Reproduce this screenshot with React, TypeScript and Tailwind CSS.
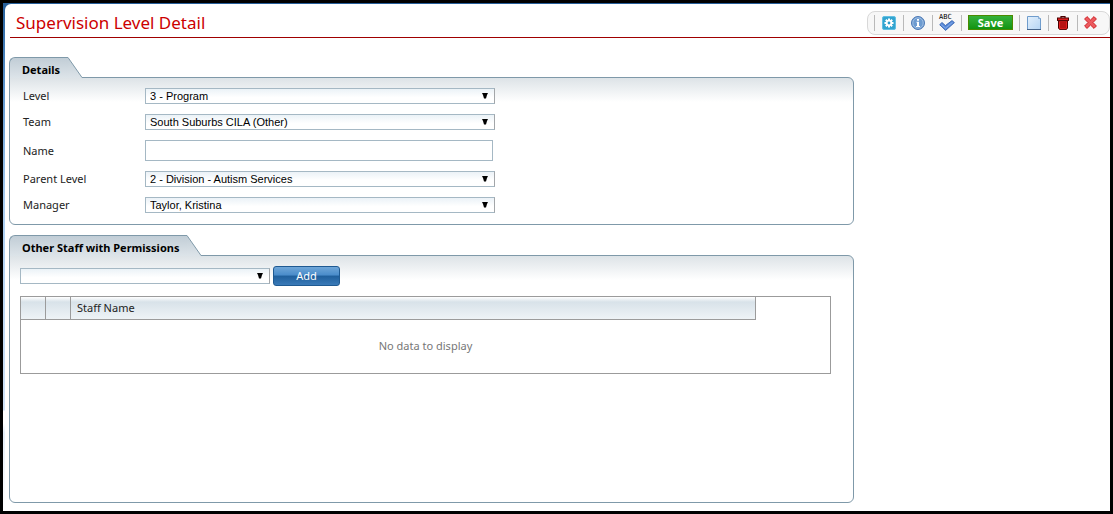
import React, { useState } from 'react';
import clsx from 'clsx';

const SelectBox = ({ id, label, options, className }: { id: string; label?: string; options: string[]; className?: string }) => (
  <div className={clsx('relative', className)}>
    <select
      id={id}
      aria-label={label}
      className="block h-4 w-full appearance-none border border-[#a5b8c4] border-r-[#a3a6a9] bg-linear-to-b from-[#ebf2f7] to-white to-60% pl-1 pr-5 font-['Liberation_Sans',sans-serif] text-[11px] leading-[14px] text-black"
    >
      {options.map((option) => (
        <option key={option}>{option}</option>
      ))}
    </select>
    <svg className="pointer-events-none absolute right-[7px] top-[5px]" width="6" height="6" viewBox="0 0 6 6">
      <path d="M0 0H6L5 2L4 5.5H2L1 2Z" fill="#000" />
    </svg>
  </div>
);

const Panel = ({ title, className, children }: { title: string; className?: string; children: React.ReactNode }) => (
  <section className="w-full max-w-[845px]">
    {/* Tab */}
    <div className="relative -mb-px flex h-[21px]">
      <h2 className="rounded-tl-md border-l border-t border-[#7f99a9] bg-linear-to-b from-[#c1cdd6] to-[#dde4e9] pl-3 pr-2 text-[11px] font-bold leading-6 text-black">
        {title}
      </h2>
      <svg width="15" height="21" viewBox="0 0 15 21">
        <defs>
          <linearGradient id="tabFill" x1="0" y1="0" x2="0" y2="1">
            <stop offset="0" stopColor="#c1cdd6" />
            <stop offset="1" stopColor="#dde4e9" />
          </linearGradient>
        </defs>
        <path d="M0 0.5L14 20.5V21H0Z" fill="url(#tabFill)" />
        <path d="M0 0.5L14 20.5H15" fill="none" stroke="#7f99a9" />
      </svg>
    </div>
    <div className={clsx('rounded-md rounded-tl-none border border-[#7f99a9] bg-[linear-gradient(#dde3e7,#ffffff_24px)]', className)}>
      {children}
    </div>
  </section>
);

const ToolButton = ({ label, className = 'w-7', children }: { label: string; className?: string; children: React.ReactNode }) => (
  <button type="button" aria-label={label} className={clsx('flex h-4 cursor-pointer flex-col items-center justify-center', className)}>
    {children}
  </button>
);

const Divider = () => <span className="h-4 w-px bg-[#b9b9b9]" />;

const GearIcon = () => (
  <svg width="14" height="14" viewBox="0 0 14 14">
    <rect x="0.5" y="0.5" width="13" height="13" rx="1.5" fill="#32a4d0" stroke="#62bfe2" />
    <g stroke="#fff" strokeWidth="2">
      <path d="M7 2.5V11.5M2.5 7H11.5M3.8 3.8L10.2 10.2M10.2 3.8L3.8 10.2" />
    </g>
    <circle cx="7" cy="7" r="3.2" fill="#fff" />
    <circle cx="7" cy="7" r="1.4" fill="#2b9bc9" />
  </svg>
);

const InfoIcon = () => (
  <svg width="14" height="14" viewBox="0 0 14 14">
    <circle cx="7" cy="7" r="6.5" fill="#6d9bd0" stroke="#4c78b4" />
    <circle cx="7" cy="7" r="5.2" fill="none" stroke="#a9c5e6" strokeWidth="0.8" />
    <path d="M6 3H8V4.8H6ZM5.5 5.8H8V10H9V11H5V10H6V6.8H5.5Z" fill="#fff" />
  </svg>
);

const CheckIcon = () => (
  <svg className="shrink-0" width="16" height="11" viewBox="0 0 16 11">
    <path d="M0.7 4.7L3 2.5L6.4 5.6L13 0.6L15.4 2.6L6.6 10.4Z" fill="#5b8bd8" stroke="#3763b0" strokeWidth="0.9" />
    <path d="M2.2 4.6L6.5 8.2L13.5 2.3" fill="none" stroke="#8db4ee" strokeWidth="0.8" />
  </svg>
);

const PageIcon = () => (
  <svg width="14" height="14" viewBox="0 0 14 14">
    <defs>
      <linearGradient id="pageFill" x1="0" y1="0" x2="1" y2="1">
        <stop offset="0" stopColor="#e3f0fc" />
        <stop offset="1" stopColor="#b5d5f5" />
      </linearGradient>
    </defs>
    <path d="M0.5 0.5H11.5L13.5 2.5V13.5H0.5Z" fill="url(#pageFill)" stroke="#6f9ccc" />
    <path d="M11.5 0.5V2.5H13.5" fill="#fff" stroke="#6f9ccc" strokeWidth="0.8" />
    <path d="M0 13.5H14" stroke="#45648a" />
  </svg>
);

const TrashIcon = () => (
  <svg width="12" height="14" viewBox="0 0 12 14">
    <path d="M4 2V0.7H8V2" fill="none" stroke="#4a0000" strokeWidth="1.2" />
    <rect x="0.5" y="2" width="11" height="2.4" fill="#e82020" stroke="#4a0000" />
    <path d="M1.5 4.8H10.5V12L9.5 13.4H2.5L1.5 12Z" fill="#e82020" stroke="#4a0000" />
    <path d="M4 6V12M6 6V12M8 6V12" stroke="#6c0000" strokeWidth="0.8" />
  </svg>
);

const CloseIcon = () => (
  <svg width="13" height="13" viewBox="0 0 13 13">
    <path
      d="M3 0.6L6.5 4L10 0.6L12.4 3L9 6.5L12.4 10L10 12.4L6.5 9L3 12.4L0.6 10L4 6.5L0.6 3Z"
      fill="#ec5a5e"
      stroke="#cf2228"
      strokeLinejoin="round"
    />
  </svg>
);

const Toolbar = () => (
  <div className="flex h-6 items-center rounded-lg border border-[#d8d8d8] bg-[#f7f7f7] pl-1.5 pr-[7px]">
    <Divider />
    <ToolButton label="Settings"><GearIcon /></ToolButton>
    <Divider />
    <ToolButton label="Information"><InfoIcon /></ToolButton>
    <Divider />
    <ToolButton label="Check spelling">
      <span className="self-start pl-1.5 font-['DejaVu_Sans_Mono',monospace] text-[7px] leading-[6px] text-black">ABC</span>
      <CheckIcon />
    </ToolButton>
    <Divider />
    <button
      type="button"
      className="mx-1.5 h-[15px] w-[45px] cursor-pointer border border-[#4a8a00] bg-linear-to-b from-[#35b13a] to-[#109410] text-[11px] font-bold leading-[13px] text-white"
    >
      Save
    </button>
    <Divider />
    <ToolButton label="New"><PageIcon /></ToolButton>
    <Divider />
    <ToolButton label="Delete"><TrashIcon /></ToolButton>
    <Divider />
    <ToolButton label="Close" className="w-6"><CloseIcon /></ToolButton>
  </div>
);

const fields = [
  { id: 'level', label: 'Level', value: '3 - Program' },
  { id: 'team', label: 'Team', value: 'South Suburbs CILA (Other)' },
  { id: 'name', label: 'Name' },
  { id: 'parentLevel', label: 'Parent Level', value: '2 - Division - Autism Services' },
  { id: 'manager', label: 'Manager', value: 'Taylor, Kristina' },
];

const App = () => {
  const [name, setName] = useState('');

  return (
    <div className="flex min-h-screen border-3 border-black bg-[linear-gradient(#265f9a,#5e97cf_90px,#a9cdf0_200px,#cfe2f7_407px,#ffffff_408px,#ffffff_420px,#e3edf8_430px,#ffffff)] pl-0.5 pt-px font-['Noto_Sans',sans-serif] text-[#222]">
      <main className="min-w-0 grow rounded-tl-md bg-white pl-1">
        <header className="ml-px flex h-[34px] items-center justify-between border-b border-[#a00000] pl-1.5 pt-1">
          <h1 className="text-[17px] leading-7 text-[#cc0000]">Supervision Level Detail</h1>
          <Toolbar />
        </header>

        <div className="flex flex-col gap-2.5 pb-2 pt-[19px]">
          <Panel title="Details" className="flex flex-col gap-2.5 pb-[11px] pl-[13px] pt-2.5">
            {fields.map((field) => (
              <div key={field.id} className="flex items-center">
                <label htmlFor={field.id} className="w-[122px] text-[11px] leading-4">{field.label}</label>
                {field.value ? (
                  <SelectBox id={field.id} options={[field.value]} className="w-[350px]" />
                ) : (
                  <input
                    id={field.id}
                    type="text"
                    value={name}
                    onChange={(e) => setName(e.target.value)}
                    className="h-[21px] w-[348px] border border-[#a5b8c4] bg-white px-1 text-[11px]"
                  />
                )}
              </div>
            ))}
          </Panel>

          <Panel title="Other Staff with Permissions" className="min-h-[248px] px-2.5 pt-2.5">
            <div className="flex items-center gap-[3px]">
              <SelectBox id="staff" label="Staff" options={['']} className="w-[250px]" />
              <button
                type="button"
                className="h-5 w-[67px] cursor-pointer rounded-[3px] border border-[#1f5a92] bg-[linear-gradient(#6fa6d8,#4a8cca_45%,#1f5f9c_50%,#3a7ab8)] text-[11px] leading-4 text-white"
              >
                Add
              </button>
            </div>

            <table className="mt-2.5 w-full max-w-[811px] table-fixed border-separate border-spacing-0 border border-[#9b9b9b] text-[11px]">
              <colgroup>
                <col className="w-[25px]" />
                <col className="w-[25px]" />
                <col />
                <col className="w-[74px]" />
              </colgroup>
              <thead>
                <tr className="h-[23px]">
                  <th className="border-b border-r border-[#9b9b9b] bg-[linear-gradient(#ffffff,#d8e2e9_5px,#eef3f6)] p-0" />
                  <th className="border-b border-r border-[#9b9b9b] bg-[linear-gradient(#ffffff,#d8e2e9_5px,#eef3f6)] p-0" />
                  <th className="border-b border-r border-[#9b9b9b] bg-[linear-gradient(#ffffff,#d8e2e9_5px,#eef3f6)] p-0 pl-1.5 text-left font-normal leading-4">
                    Staff Name
                  </th>
                  <td className="p-0" />
                </tr>
              </thead>
              <tbody>
                <tr className="h-[53px]">
                  <td colSpan={4} className="p-0 text-center text-[#777]">No data to display</td>
                </tr>
              </tbody>
            </table>
          </Panel>
        </div>
      </main>
    </div>
  );
};

export default App;
